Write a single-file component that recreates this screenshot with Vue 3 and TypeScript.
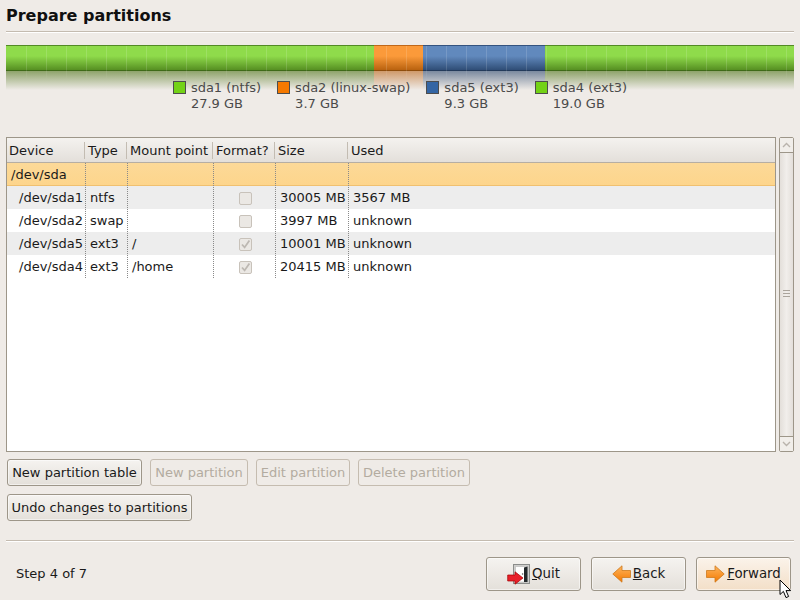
<script setup lang="ts">
interface Seg { name: string; color: string; width: number }
interface Leg { name: string; size: string; color: string }
interface Row { device: string; type: string; mount: string; format: boolean | null; size: string; used: string }

const segments: Seg[] = [
  { name: 'green', color: 'seg-green', width: 368 },
  { name: 'orange', color: 'seg-orange', width: 49 },
  { name: 'blue', color: 'seg-blue', width: 122 },
  { name: 'green2', color: 'seg-green', width: 249 },
]
const legend: Leg[] = [
  { name: 'sda1 (ntfs)', size: '27.9 GB', color: '#73d216' },
  { name: 'sda2 (linux-swap)', size: '3.7 GB', color: '#f57900' },
  { name: 'sda5 (ext3)', size: '9.3 GB', color: '#3465a4' },
  { name: 'sda4 (ext3)', size: '19.0 GB', color: '#73d216' },
]
const columns: string[] = ['Device', 'Type', 'Mount point', 'Format?', 'Size', 'Used']
const rows: Row[] = [
  { device: '/dev/sda1', type: 'ntfs', mount: '', format: false, size: '30005 MB', used: '3567 MB' },
  { device: '/dev/sda2', type: 'swap', mount: '', format: false, size: '3997 MB', used: 'unknown' },
  { device: '/dev/sda5', type: 'ext3', mount: '/', format: true, size: '10001 MB', used: 'unknown' },
  { device: '/dev/sda4', type: 'ext3', mount: '/home', format: true, size: '20415 MB', used: 'unknown' },
]
</script>

<template>
  <div class="page">
    <h1 class="title">Prepare partitions</h1>
    <div class="rule"></div>

    <div class="bar">
      <div v-for="s in segments" :key="s.name" class="seg" :class="s.color" :style="{ width: s.width + 'px' }">
        <div class="seg-face"></div>
        <div class="seg-reflect"></div>
      </div>
      <div class="ticks"></div>
    </div>

    <div class="legend">
      <div v-for="l in legend" :key="l.name" class="legend-item">
        <span class="swatch" :style="{ background: l.color }"></span>
        <div class="legend-text">
          <div>{{ l.name }}</div>
          <div>{{ l.size }}</div>
        </div>
      </div>
    </div>

    <div class="table-wrap">
      <div class="table">
        <div class="head grid">
          <div v-for="c in columns" :key="c" class="hcell">{{ c }}</div>
        </div>
        <div class="body">
          <div class="vlines grid">
            <div v-for="c in columns" :key="c" class="vline"></div>
          </div>
          <div class="row selected grid"><div class="cell">/dev/sda</div></div>
          <div v-for="(r, i) in rows" :key="r.device" class="row grid" :class="{ odd: i % 2 === 0 }">
            <div class="cell device">{{ r.device }}</div>
            <div class="cell">{{ r.type }}</div>
            <div class="cell">{{ r.mount }}</div>
            <div class="cell check-cell">
              <span class="check">
                <svg v-if="r.format" width="11" height="11" viewBox="0 0 11 11">
                  <path d="M2 5.5 L4.6 8.4 L9.4 1.6" fill="none" stroke="#bdb8b2" stroke-width="1.8" />
                </svg>
              </span>
            </div>
            <div class="cell size">{{ r.size }}</div>
            <div class="cell">{{ r.used }}</div>
          </div>
        </div>
      </div>
      <div class="scrollbar">
        <div class="sb-btn sb-top">
          <svg width="9" height="6" viewBox="0 0 9 6"><path d="M1 5 L4.5 1.5 L8 5" fill="none" stroke="#b9b3ac" stroke-width="1.4" /></svg>
        </div>
        <div class="sb-track"><span class="grip"></span></div>
        <div class="sb-btn sb-bottom">
          <svg width="9" height="6" viewBox="0 0 9 6"><path d="M1 1 L4.5 4.5 L8 1" fill="none" stroke="#b9b3ac" stroke-width="1.4" /></svg>
        </div>
      </div>
    </div>

    <div class="actions">
      <button class="btn small w-table">New partition table</button>
      <button class="btn small off w-new">New partition</button>
      <button class="btn small off w-edit">Edit partition</button>
      <button class="btn small off w-del">Delete partition</button>
    </div>
    <div class="actions second">
      <button class="btn small w-undo">Undo changes to partitions</button>
    </div>

    <div class="rule foot-rule"></div>

    <div class="footer">
      <span class="step">Step 4 of 7</span>
      <div class="foot-buttons">
        <button class="btn nav">
          <svg class="ico" width="23" height="21" viewBox="0 0 23 21">
            <rect x="6.5" y="0.5" width="16" height="19" fill="#cfcfcd" stroke="#8b8d8b" />
            <path d="M8.5 2.5 H20.5 V18 H8.5 Z" fill="#fff" stroke="#b5b5b3" stroke-width=".6" />
            <path d="M17 18 V3.5 L20.5 2.5 V18 Z" fill="#23282a" />
            <circle cx="15.6" cy="10" r=".8" fill="#555" />
            <path d="M0.7 11 H8 V7.8 L16 14 L8 20.2 V17 H0.7 Z" fill="#e8202a" stroke="#a40000" stroke-width=".7" />
          </svg>
          <span class="lbl"><u>Q</u>uit</span>
        </button>
        <button class="btn nav">
          <svg class="ico" width="19" height="18" viewBox="0 0 19 18">
            <defs>
              <linearGradient id="og1" x1="0" y1="0" x2="0" y2="1">
                <stop offset="0" stop-color="#fdb55e" /><stop offset="1" stop-color="#f57900" />
              </linearGradient>
            </defs>
            <path d="M18.5 5.5 H10 V0.8 L0.8 9 L10 17.2 V12.5 H18.5 Z" fill="url(#og1)" stroke="#ce7a1c" stroke-width=".8" />
          </svg>
          <span class="lbl"><u>B</u>ack</span>
        </button>
        <button class="btn nav hot">
          <svg class="ico" width="19" height="18" viewBox="0 0 19 18">
            <defs>
              <linearGradient id="og2" x1="0" y1="0" x2="0" y2="1">
                <stop offset="0" stop-color="#fdb55e" /><stop offset="1" stop-color="#f57900" />
              </linearGradient>
            </defs>
            <path d="M0.5 5.5 H9 V0.8 L18.2 9 L9 17.2 V12.5 H0.5 Z" fill="url(#og2)" stroke="#ce7a1c" stroke-width=".8" />
          </svg>
          <span class="lbl"><u>F</u>orward</span>
        </button>
      </div>
    </div>

    <svg class="cursor" width="14" height="20" viewBox="0 0 14 20">
      <path d="M1 1 V15.5 L4.4 12.4 L7 18.6 L9.6 17.5 L7 11.6 H11.6 Z" fill="#fff" stroke="#000" stroke-width="1" />
    </svg>
  </div>
</template>

<style scoped>
.page {
  position: relative;
  width: 800px;
  height: 600px;
  box-sizing: border-box;
  overflow: hidden;
  padding: 0 6px;
  background: #efebe7;
  font-family: "DejaVu Sans", sans-serif;
  font-size: 13px;
  color: #1a1a1a;
  display: flex;
  flex-direction: column;
}
.title {
  margin: 6px 0 0;
  height: 20px;
  line-height: 20px;
  font-size: 16px;
  font-weight: bold;
  color: #101010;
}
.rule {
  flex: none;
  height: 1px;
  background: #c4bbb0;
  border-bottom: 1px solid #fff;
  margin-top: 5px;
}
.bar {
  position: relative;
  display: flex;
  flex: none;
  margin-top: 12px;
  height: 45px;
}
.ticks {
  position: absolute;
  left: 20px;
  right: 0;
  top: 1px;
  height: 34px;
  background: repeating-linear-gradient(90deg, rgba(255, 255, 255, .14) 0 1px, transparent 1px 20px);
  -webkit-mask-image: linear-gradient(180deg, #000 0%, #000 65%, transparent 100%);
  mask-image: linear-gradient(180deg, #000 0%, #000 65%, transparent 100%);
}
.seg { height: 45px; }
.seg-face {
  height: 26px;
  box-sizing: border-box;
  border-top: 1px solid var(--edge);
  border-bottom: 1px solid var(--dark);
  background: linear-gradient(180deg, var(--hi) 0%, var(--hi) 42%, var(--lo) 100%);
}
.seg-reflect {
  height: 19px;
  background: linear-gradient(180deg, var(--ref) 0%, rgba(239, 235, 231, 0) 100%);
}
.seg-green { --hi: #8fdb4b; --lo: #568f22; --edge: #528a25; --dark: #3e6a18; --ref: rgba(90, 125, 40, .65); }
.seg-orange { --hi: #fb9a3a; --lo: #b9620f; --edge: #c0681a; --dark: #8f4d0c; --ref: rgba(190, 110, 40, .65); }
.seg-blue { --hi: #6189bd; --lo: #2f4d76; --edge: #34537f; --dark: #233a5a; --ref: rgba(60, 85, 120, .65); }
.legend {
  display: flex;
  flex: none;
  justify-content: center;
  gap: 16px;
  margin-top: -10px;
  position: relative;
}
.legend-item {
  display: flex;
  gap: 5px;
}
.swatch {
  width: 11px;
  height: 11px;
  margin-top: 1px;
  border: 1px solid #4d4d4d;
}
.legend-text {
  line-height: 16px;
  color: #4a4a4a;
}
.table-wrap {
  display: flex;
  flex: none;
  gap: 3px;
  margin-top: 25px;
  height: 315px;
}
.table {
  width: 770px;
  box-sizing: border-box;
  border: 1px solid #9d9689;
  background: #fff;
  overflow: hidden;
}
.grid {
  display: grid;
  grid-template-columns: 79px 42px 86px 62px 73px 1fr;
}
.head {
  height: 25px;
  box-sizing: border-box;
  background: linear-gradient(180deg, #f4f2ef 0%, #e3dfda 100%);
  border-bottom: 1px solid #b6aea3;
}
.hcell {
  line-height: 25px;
  padding-left: 2px;
  position: relative;
  white-space: nowrap;
}
.hcell:not(:last-child)::after {
  content: "";
  position: absolute;
  right: 1px;
  top: 4px;
  height: 17px;
  width: 1px;
  background: #c3bcb2;
}
.body {
  position: relative;
  height: 288px;
}
.vlines {
  position: absolute;
  left: 0;
  top: 0;
  right: 0;
  height: 115px;
  z-index: 2;
  pointer-events: none;
}
.vline:not(:last-child) {
  border-right: 1px dotted #8a8a8a;
}
.row {
  height: 23px;
  line-height: 22px;
  padding-top: 1px;
  box-sizing: border-box;
}
.odd { background: #ededed; }
.selected {
  background: linear-gradient(180deg, #fcd998 0%, #fdd58c 100%);
  border-bottom: 1px solid #f0c070;
}
.cell {
  padding-left: 4px;
  white-space: nowrap;
}
.device { padding-left: 12px; }
.size { padding-left: 4px; }
.check-cell {
  display: flex;
  align-items: center;
  justify-content: center;
  padding: 0;
}
.check {
  width: 11px;
  height: 11px;
  border: 1px solid #c8c2ba;
  border-radius: 2px;
  background: #ebe8e4;
  display: flex;
}
.scrollbar {
  width: 15px;
  box-sizing: border-box;
  border: 1px solid #9d9689;
  border-radius: 2px;
  display: flex;
  flex-direction: column;
  background: linear-gradient(90deg, #e3dfda, #f1eeeb 50%, #e3dfda);
}
.sb-btn {
  height: 14px;
  background: #f1eeea;
  display: flex;
  align-items: center;
  justify-content: center;
}
.sb-top { border-bottom: 1px solid #9d9689; }
.sb-bottom { border-top: 1px solid #9d9689; }
.sb-track {
  flex: 1;
  display: flex;
  align-items: center;
  justify-content: center;
}
.grip {
  display: block;
  width: 7px;
  height: 5px;
  margin-bottom: 2px;
  border-top: 1px solid #aaa49c;
  border-bottom: 1px solid #aaa49c;
  background: linear-gradient(#aaa49c, #aaa49c) center / 100% 1px no-repeat;
}
.actions {
  display: flex;
  flex: none;
  gap: 8px;
  margin-top: 7px;
  margin-left: 1px;
  align-items: flex-start;
}
.second { margin-top: 8px; }
.btn {
  box-sizing: border-box;
  font: inherit;
  color: #1a1a1a;
  border: 1px solid #9d9689;
  border-radius: 3px;
  background: linear-gradient(180deg, #f5f3f0 0%, #e4e0da 100%);
  padding: 0;
  margin: 0;
  box-shadow: inset 0 0 0 1px rgba(255, 255, 255, .5);
}
.small {
  height: 27px;
  white-space: nowrap;
}
.off {
  color: #b3aba0;
  background: #efebe7;
  border-color: #c5bcb0;
  box-shadow: none;
}
.w-table { width: 135px; }
.w-undo { width: 185px; }
.w-new { width: 98px; }
.w-edit { width: 94px; }
.w-del { width: 112px; }
.foot-rule { margin-top: 19px; }
.footer {
  display: flex;
  flex: none;
  align-items: center;
  justify-content: space-between;
  margin-top: 15px;
  height: 34px;
  padding-left: 10px;
  padding-right: 3px;
}
.step { margin-bottom: 2px; }
.foot-buttons {
  display: flex;
  gap: 10px;
}
.nav {
  width: 95px;
  height: 34px;
  display: flex;
  align-items: center;
  justify-content: center;
  gap: 2px;
  font-size: 13.33px;
}
.hot {
  background: linear-gradient(180deg, #fbf3ea 0%, #f3dfc8 100%);
}
.ico { flex: none; }
.lbl {
  white-space: nowrap;
  margin-bottom: 2px;
}
.cursor {
  position: absolute;
  left: 779px;
  top: 579px;
}
</style>
